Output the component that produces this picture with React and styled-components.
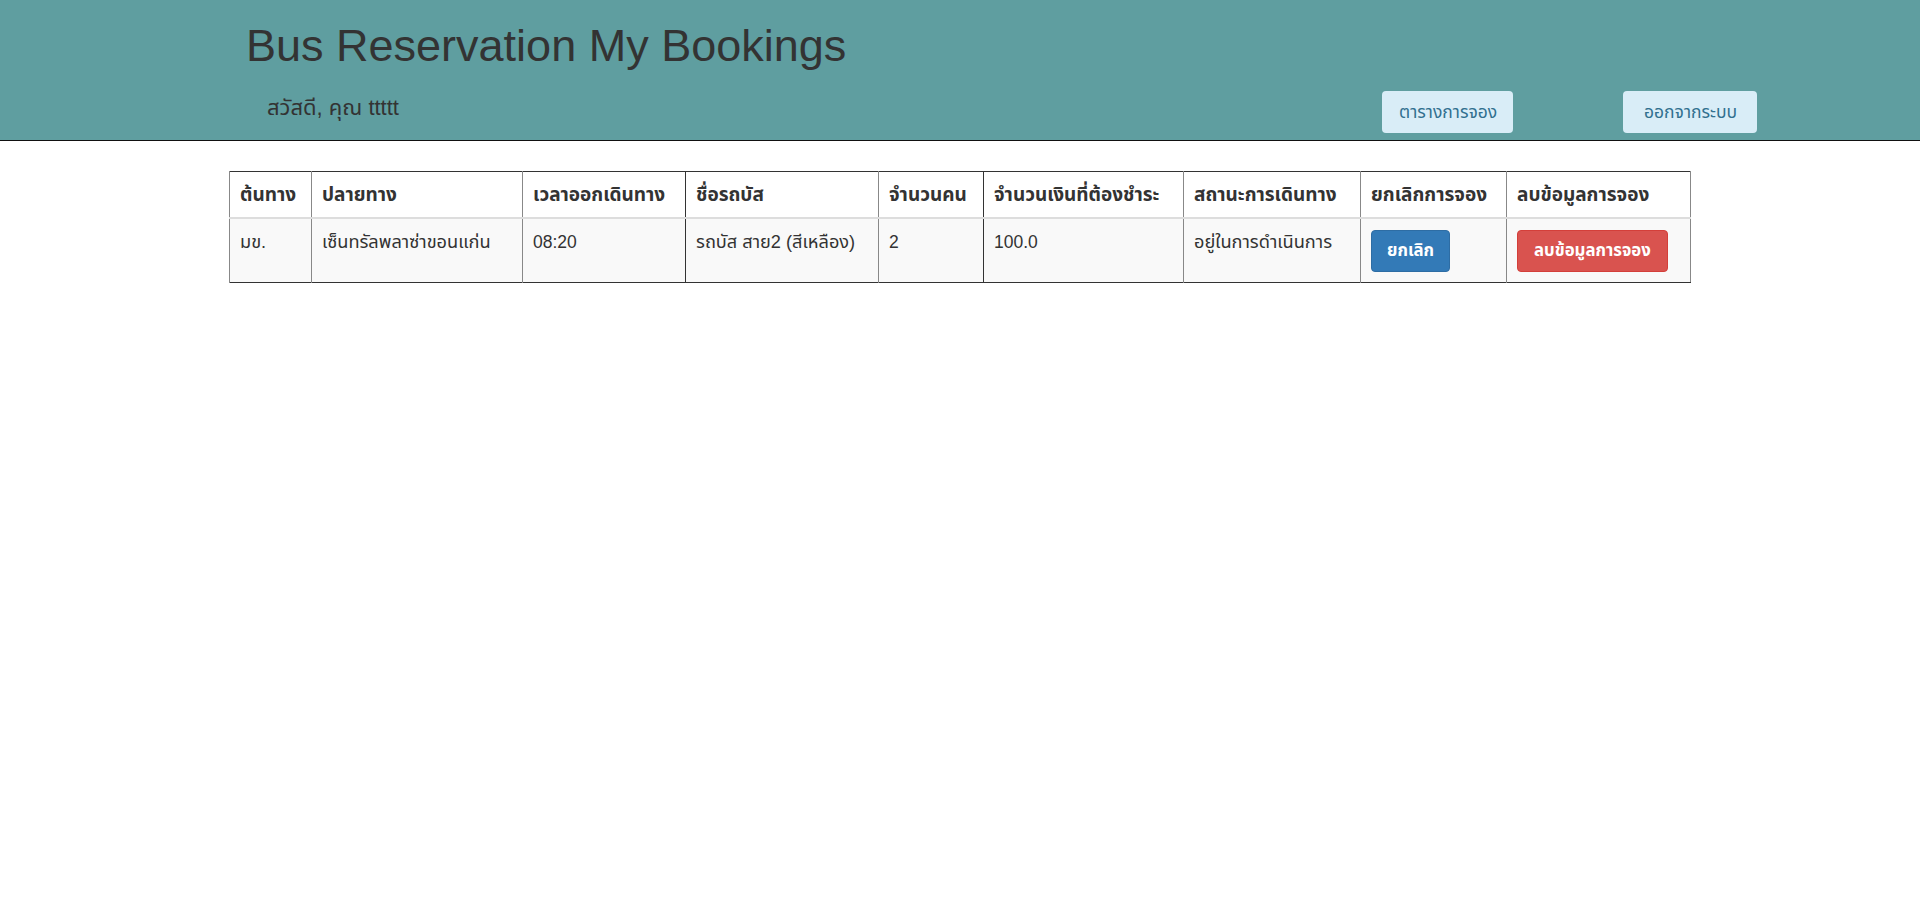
import React from "react";
import styled, { createGlobalStyle } from "styled-components";

const Global = createGlobalStyle`
  html, body { margin: 0; padding: 0; background: #fff; }
  body {
    font-family: "Liberation Sans", Arial, "Noto Sans Thai", Tahoma, sans-serif;
    color: #333;
    font-size: 16px;
  }
`;

const Header = styled.header`
  background: #5f9ea0;
  border-bottom: 1px solid #111;
  box-sizing: border-box;
  height: 141px;
  padding: 21px 163px 0 246px;
  display: flex;
  flex-direction: column;
`;

const Title = styled.h1`
  margin: 0;
  font-size: 45px;
  line-height: 49px;
  font-weight: 400;
  color: #333;
`;

const SubRow = styled.div`
  display: flex;
  justify-content: space-between;
  align-items: flex-start;
`;

const Greeting = styled.div`
  margin: 25px 0 0 21px;
  font-size: 22px;
  line-height: 26px;
  color: #333;
`;

const Nav = styled.nav`
  display: flex;
  gap: 110px;
  margin-top: 21px;
`;

const NavButton = styled.button`
  height: 42px;
  width: ${(p) => p.$w}px;
  padding: 0 10px 0 ${(p) => p.$pl}px;
  text-align: left;
  white-space: nowrap;
  border: none;
  border-radius: 4px;
  background: #d9edf7;
  color: #31708f;
  font-family: inherit;
  font-size: 17.5px;
  cursor: pointer;
`;

const Table = styled.table`
  width: 1461px;
  margin: 30px auto 0;
  border-collapse: collapse;
  table-layout: fixed;
  border-top: 1px solid #333;
  border-bottom: 1px solid #333;
  border-left: 1px solid #666;
  border-right: 1px solid #888;
`;

const Th = styled.th`
  text-align: left;
  font-weight: 700;
  padding: 10px 10px;
  line-height: 25px;
  font-size: 19px;
  border-left: 1px solid ${(p) => (p.$dark ? "#333" : "#888")};
  border-bottom: 2px solid #ddd;
  background: #fff;
  white-space: nowrap;
  overflow: hidden;
`;

const Td = styled.td`
  vertical-align: top;
  padding: 11px 10px 10px;
  line-height: 25px;
  font-size: ${(p) => (p.$latin ? "17.5px" : "18.2px")};
  border-left: 1px solid ${(p) => (p.$dark ? "#333" : "#888")};
  background: #f9f9f9;
  white-space: nowrap;
`;

const ActionButton = styled.button`
  height: 42px;
  padding: 0 ${(p) => (p.$danger ? 16 : 15)}px;
  border: 1px solid ${(p) => (p.$danger ? "#d43f3a" : "#2e6da4")};
  border-radius: 4px;
  background: ${(p) => (p.$danger ? "#d9534f" : "#337ab7")};
  color: #fff;
  font-family: inherit;
  font-size: 16.8px;
  font-weight: 700;
  white-space: nowrap;
  cursor: pointer;
`;

const columns = [
  { label: "ต้นทาง", w: 82 },
  { label: "ปลายทาง", w: 211 },
  { label: "เวลาออกเดินทาง", w: 163 },
  { label: "ชื่อรถบัส", w: 193, dark: true },
  { label: "จำนวนคน", w: 105 },
  { label: "จำนวนเงินที่ต้องชำระ", w: 200, dark: true },
  { label: "สถานะการเดินทาง", w: 177 },
  { label: "ยกเลิกการจอง", w: 146 },
  { label: "ลบข้อมูลการจอง", w: 184 },
];

const row = [
  { v: "มข." },
  { v: "เซ็นทรัลพลาซ่าขอนแก่น" },
  { v: "08:20", latin: true },
  { v: "รถบัส สาย2 (สีเหลือง)" },
  { v: "2", latin: true },
  { v: "100.0", latin: true },
  { v: "อยู่ในการดำเนินการ" },
];

export default function App() {
  return (
    <>
      <Global />
      <Header>
        <Title>Bus Reservation My Bookings</Title>
        <SubRow>
          <Greeting>สวัสดี, คุณ ttttt</Greeting>
          <Nav>
            <NavButton $w={131} $pl={17}>ตารางการจอง</NavButton>
            <NavButton $w={134} $pl={21}>ออกจากระบบ</NavButton>
          </Nav>
        </SubRow>
      </Header>
      <Table>
        <colgroup>
          {columns.map((c) => (
            <col key={c.label} style={{ width: c.w }} />
          ))}
        </colgroup>
        <thead>
          <tr>
            {columns.map((c) => (
              <Th key={c.label} $dark={c.dark}>{c.label}</Th>
            ))}
          </tr>
        </thead>
        <tbody>
          <tr>
            {row.map((cell, i) => (
              <Td key={i} $dark={columns[i].dark} $latin={cell.latin}>{cell.v}</Td>
            ))}
            <Td>
              <ActionButton>ยกเลิก</ActionButton>
            </Td>
            <Td>
              <ActionButton $danger>ลบข้อมูลการจอง</ActionButton>
            </Td>
          </tr>
        </tbody>
      </Table>
    </>
  );
}
